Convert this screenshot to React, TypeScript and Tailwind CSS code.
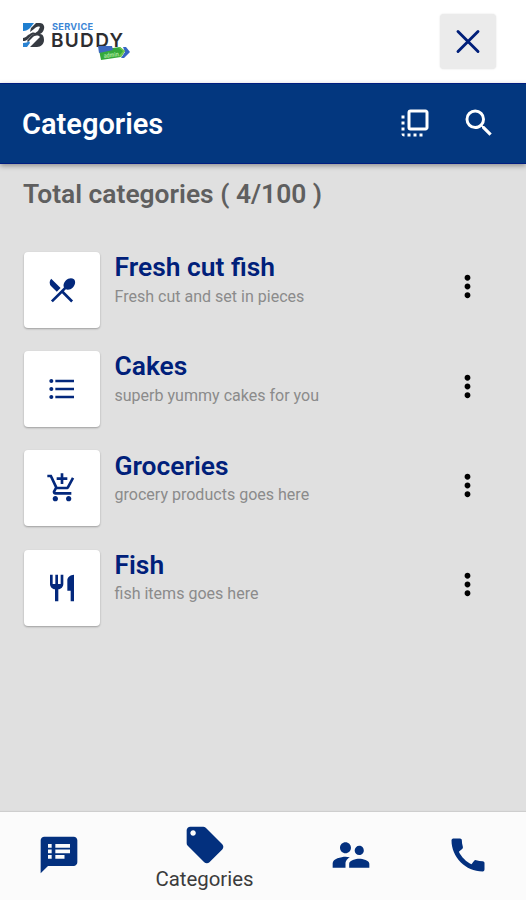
import {
  MdAddShoppingCart,
  MdCall,
  MdFlipToFront,
  MdFormatListBulleted,
  MdLocalOffer,
  MdMoreVert,
  MdRestaurant,
  MdRestaurantMenu,
  MdSearch,
  MdSpeakerNotes,
  MdSupervisorAccount,
} from "react-icons/md";

const categories = [
  { name: "Fresh cut fish", text: "Fresh cut and set in pieces", icon: MdRestaurantMenu },
  { name: "Cakes", text: "superb yummy cakes for you", icon: MdFormatListBulleted },
  { name: "Groceries", text: "grocery products goes here", icon: MdAddShoppingCart },
  { name: "Fish", text: "fish items goes here", icon: MdRestaurant },
];

function LogoMark() {
  return (
    <svg width="23" height="26" viewBox="0 0 23 26">
      <path d="M1 1h11L8 6C6 8 4 9 1 9z" fill="#1f7fd0" />
      <path d="M14 1h4c3 0 5 3 4 6-1 3-2 4-4 5 3 0 4 3 4 6 0 4-3 7-7 7H8l6-6 4-4c-2-2-5-2-8 1l-4 4-1-1 4-5 7-5 2-4c-2-1-4 0-6 2l-4 3 1-4z" fill="#363b42" />
      <path d="M1 16c3 0 4-3 7-4 2-2 5-2 6 0-3 0-4 1-6 3s-3 4-7 4z" fill="#363b42" />
      <path d="M1 21c3 0 5-1 6-2l1 2-3 4H1z" fill="#2b83d2" />
    </svg>
  );
}

function Logo() {
  return (
    <div className="relative flex items-start">
      <div className="pt-[2px]">
        <LogoMark />
      </div>
      <div className="ml-[6px] flex flex-col font-['Inter',sans-serif]">
        <span className="ml-px pt-[2px] text-[9.2px] font-bold leading-[10px] tracking-[0.3px] text-[#3c86d6]">
          SERVICE
        </span>
        <span className="pt-px text-[19px] font-semibold leading-[15px] tracking-[1.3px] text-[#2d2d30]">BUDDY</span>
      </div>
      <svg width="34" height="17" viewBox="0 0 34 17" className="absolute left-[76px] top-[24px]">
        <path d="M25 3h3l4 5-6 6h-3l4-6z" fill="#3566c4" />
        <path d="M1 6l21-3 5 4-4 6-20 3z" fill="#35a93b" />
        <path d="M0 2h14l1 4-14 3z" fill="#3d69c0" />
        <path d="M22 3l5 4-4 6-2-1 4-5-4-3z" fill="#72c94f" />
        <text x="6" y="14" fontSize="6.5" fontWeight="700" textLength="15" lengthAdjust="spacingAndGlyphs" transform="rotate(-7 6 14)" fill="#a9e59b">
          admin
        </text>
      </svg>
    </div>
  );
}

export default function App() {
  return (
    <div className="flex h-[900px] w-[526px] flex-col overflow-hidden bg-[#e0e0e0] font-['Roboto',sans-serif]">
      <header className="flex h-[83px] shrink-0 items-start justify-between bg-white pl-[22px] pr-[30px]">
        <div className="pt-5">
          <Logo />
        </div>
        <button className="mt-[14px] flex h-[55px] w-14 items-center justify-center rounded-[4px] bg-[#ebebeb] shadow-[0_0_2px_rgba(0,0,0,0.12)]">
          <svg width="26" height="26" viewBox="0 0 26 26" stroke="#001f7a" strokeWidth="2.9" strokeLinecap="round">
            <path d="M3 2.5l20 20M23 2.5l-20 20" />
          </svg>
        </button>
      </header>

      <div className="z-10 flex h-[81px] shrink-0 items-center border-y border-[#001d80] bg-[#03377f] pb-px pl-[22px] pr-[29px] text-white shadow-[0_2px_5px_rgba(0,0,0,0.35)]">
        <h1 className="flex-1 pt-[3px] text-[29px] font-semibold leading-none">Categories</h1>
        <MdFlipToFront size={36} className="mr-7" />
        <MdSearch size={36} />
      </div>

      <main className="flex-1 pl-6 pr-[41px]">
        <h2 className="-ml-px mt-[14px] h-8 whitespace-nowrap text-[26.4px] font-semibold leading-8 text-[#5f5f5f]">
          Total categories ( 4/100 )
        </h2>
        <ul className="mt-[41.7px]">
          {categories.map(({ name, text, icon: Icon }) => (
            <li key={name} className="flex h-[99.3px] items-start">
              <div className="flex size-[76px] items-center justify-center rounded-[4px] bg-white text-[#03287c] shadow-[0_1px_2px_rgba(0,0,0,0.3)]">
                <Icon size={32} />
              </div>
              <div className="flex-1 pl-[14.5px]">
                <h3 className="pt-[0.4px] text-[26.4px] font-semibold leading-[31px] text-[#00207a]">{name}</h3>
                <p className="mt-[3.5px] text-[16.05px] leading-5 text-[#8b8b8b]">{text}</p>
              </div>
              <MdMoreVert size={35} className="mt-[17.7px] text-black" />
            </li>
          ))}
        </ul>
      </main>

      <nav className="flex h-[88px] shrink-0 bg-[#fbfbfb] text-[#03307e] shadow-[0_-1px_1px_rgba(0,0,0,0.08)]">
        <a className="flex w-[117px] items-center justify-center pb-[2px]">
          <MdSpeakerNotes size={44} />
        </a>
        <a className="flex w-[175px] flex-col items-center pt-[11px]">
          <MdLocalOffer size={44} />
          <span className="text-[20.4px] leading-6 text-[#3c3c3c]">Categories</span>
        </a>
        <a className="flex w-[117px] items-center justify-center pb-[2px]">
          <MdSupervisorAccount size={44} />
        </a>
        <a className="flex w-[117px] items-center justify-center pb-[2px]">
          <MdCall size={44} />
        </a>
      </nav>
    </div>
  );
}
